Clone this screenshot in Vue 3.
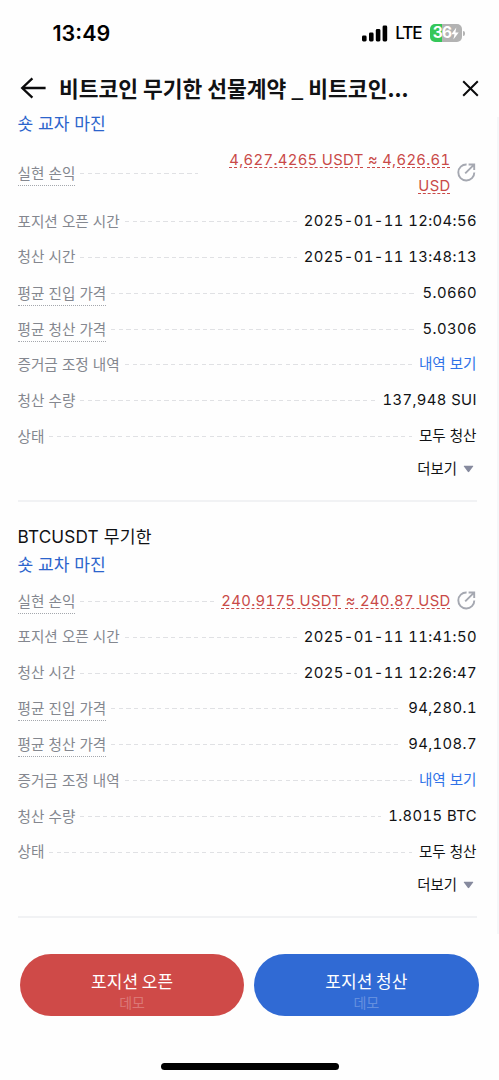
<script setup>
const positions = [
  {
    symbol: '',
    margin: '숏 교자 마진',
    pnl: [['4,627.4265 USDT'], ['≈ 4,626.61', 'USD']],
    tall: true,
    rows: [
      { label: '포지션 오픈 시간', value: '2025-01-11 12:04:56', kind: 'time' },
      { label: '청산 시간', value: '2025-01-11 13:48:13', kind: 'time' },
      { label: '평균 진입 가격', value: '5.0660', hint: true },
      { label: '평균 청산 가격', value: '5.0306', hint: true },
      { label: '증거금 조정 내역', value: '내역 보기', kind: 'link' },
      { label: '청산 수량', value: '137,948 SUI' },
      { label: '상태', value: '모두 청산', kind: 'ko' },
    ],
  },
  {
    symbol: 'BTCUSDT 무기한',
    margin: '숏 교차 마진',
    pnl: [['240.9175 USDT'], ['≈ 240.87 USD']],
    tall: false,
    rows: [
      { label: '포지션 오픈 시간', value: '2025-01-11 11:41:50', kind: 'time' },
      { label: '청산 시간', value: '2025-01-11 12:26:47', kind: 'time' },
      { label: '평균 진입 가격', value: '94,280.1', hint: true },
      { label: '평균 청산 가격', value: '94,108.7', hint: true },
      { label: '증거금 조정 내역', value: '내역 보기', kind: 'link' },
      { label: '청산 수량', value: '1.8015 BTC' },
      { label: '상태', value: '모두 청산', kind: 'ko' },
    ],
  },
]
</script>

<template>
  <div class="screen">
    <div class="status">
      <span class="clock">13:49</span>
      <div class="indicators">
        <svg class="signal" width="26" height="17" viewBox="0 0 26 17">
          <rect x="0" y="10.5" width="4.6" height="6" rx="1.4" />
          <rect x="7" y="7.5" width="4.6" height="9" rx="1.4" />
          <rect x="13.8" y="4" width="4.6" height="12.5" rx="1.4" />
          <rect x="20.6" y="0.5" width="4.6" height="16" rx="1.4" />
        </svg>
        <span class="network">LTE</span>
        <div class="battery">
          <span class="level">36</span>
          <svg class="bolt" width="8" height="13" viewBox="0 0 8 13">
            <path d="M5.3 0.6 L0.3 7.2 H3.5 L2.4 12.4 L7.7 5.5 H4.4 Z" fill="#fff" />
          </svg>
        </div>
        <span class="nub"></span>
      </div>
    </div>

    <header class="header">
      <svg class="back" width="27" height="22" viewBox="0 0 27 22">
        <path d="M12.4 1.3 L2.2 11 L12.4 20.7 M2.4 11 H25.6" fill="none" stroke="#0b0b0c" stroke-width="2.3" />
      </svg>
      <h1 class="title">비트코인 무기한 선물계약 _ 비트코인...</h1>
      <svg class="close" width="17" height="17" viewBox="0 0 17 17">
        <path d="M1.2 1.2 L15.8 15.8 M15.8 1.2 L1.2 15.8" fill="none" stroke="#0b0b0c" stroke-width="2" />
      </svg>
    </header>

    <main class="list">
      <section v-for="(p, i) in positions" :key="i" class="position">
        <h2 v-if="p.symbol" class="symbol">{{ p.symbol }}</h2>
        <div class="margin">{{ p.margin }}</div>
        <div class="row" :class="{ tall: p.tall }">
          <span class="label hint">실현 손익</span>
          <span class="leader"></span>
          <span class="pnl">
            <span class="amount">{{ p.pnl[0][0] }}</span>&#32;<span class="amount">{{ p.pnl[1][0] }}</span>
            <template v-if="p.pnl[1][1]"><br /><span class="amount">{{ p.pnl[1][1] }}</span></template>
          </span>
          <svg class="share" width="19" height="19" viewBox="0 0 19 19">
            <path d="M9.6 1.5 A8 8 0 1 0 17.3 9.4" fill="none" stroke="#a5a8b1" stroke-width="1.9" />
            <path d="M8.2 10.4 L16.8 1.8 M11.6 1.5 H17.2 V7.1" fill="none" stroke="#a5a8b1" stroke-width="1.9" />
          </svg>
        </div>
        <div v-for="row in p.rows" :key="row.label" class="row">
          <span class="label" :class="{ hint: row.hint }">{{ row.label }}</span>
          <span class="leader"></span>
          <span class="value" :class="row.kind">{{ row.value }}</span>
        </div>
        <div class="more">
          <span>더보기</span>
          <svg width="11" height="8" viewBox="0 0 11 8">
            <path d="M1.2 0.8 H9.8 Q10.7 0.8 10.1 1.6 L6.2 6.8 Q5.5 7.6 4.8 6.8 L0.9 1.6 Q0.3 0.8 1.2 0.8 Z" fill="#868a9e" />
          </svg>
        </div>
      </section>
    </main>

    <footer class="actions">
      <button class="action open"><span>포지션 오픈</span><small>데모</small></button>
      <button class="action settle"><span>포지션 청산</span><small>데모</small></button>
    </footer>
    <div class="home"></div>
  </div>
</template>

<style>
body {
  margin: 0;
  background: #fff;
}
</style>

<style scoped>
.screen {
  display: flex;
  flex-direction: column;
  width: 499px;
  height: 1080px;
  overflow: hidden;
  background: #fefefe;
  color: #111214;
  font-family: Inter, "Noto Sans CJK KR", sans-serif;
}
.status {
  display: flex;
  flex: none;
  align-items: center;
  justify-content: space-between;
  box-sizing: border-box;
  height: 66px;
  padding: 0 34px 0 52.5px;
}
.clock {
  font-size: 21.5px;
  font-weight: 600;
  color: #000;
}
.indicators {
  display: flex;
  align-items: center;
}
.network {
  margin: 0 0.6px 0 7px;
  font-size: 17px;
  font-weight: 500;
  letter-spacing: -1.1px;
  color: #000;
}
.battery {
  display: flex;
  align-items: center;
  justify-content: center;
  width: 32px;
  height: 18px;
  margin-left: 8px;
  border-radius: 5px;
  background: linear-gradient(90deg, #35c759 0 12px, #b3b3b3 12px);
}
.level {
  font-size: 15.5px;
  font-weight: 700;
  line-height: 18px;
  letter-spacing: -0.8px;
  color: #fff;
}
.nub {
  width: 2px;
  height: 5px;
  margin-left: 1px;
  border-radius: 0 2px 2px 0;
  background: #b3b3b3;
}
.header {
  display: flex;
  flex: none;
  align-items: center;
  box-sizing: border-box;
  height: 51px;
  padding: 0 20px 7px 20px;
}
.title {
  flex: 1;
  margin: 0 0 0 12px;
  font-family: "Noto Sans CJK KR", sans-serif;
  font-size: 21.5px;
  font-weight: 700;
  line-height: 32px;
  white-space: nowrap;
}
.list {
  display: flex;
  flex: none;
  flex-direction: column;
  box-sizing: border-box;
  height: 817px;
  padding: 0 20.5px 16px 17.5px;
  border-right: 2px solid #f6f7f9;
}
.position {
  flex: none;
  padding: 20px 0 16px;
  border-bottom: 2px solid #f1f2f4;
}
.position:first-child {
  margin-top: -7.9px;
  padding-top: 0;
}
.symbol {
  height: 28px;
  margin: 0;
  font-size: 17.2px;
  font-weight: 400;
  line-height: 29px;
  letter-spacing: 0.15px;
}
.margin {
  height: 28px;
  margin-bottom: 5px;
  font-size: 17.1px;
  line-height: 29px;
  color: #2c64cc;
}
.row {
  display: flex;
  align-items: center;
  height: 35.85px;
  font-size: 14.8px;
  white-space: nowrap;
}
.row.tall {
  height: 61px;
}
.label {
  padding-top: 1px;
  font-size: 14.6px;
  line-height: 20px;
  color: #84878f;
}
.label.hint {
  padding: 4px 0 1px;
  border-bottom: 1px dotted #a4a7ad;
}
.leader {
  flex: 1;
  height: 1px;
  margin: 1px 7px 0 5px;
  background: repeating-linear-gradient(90deg, #e0e1e4 0 4.4px, transparent 4.4px 7.65px);
}
.value {
  margin-right: -0.4px;
  line-height: 20px;
  letter-spacing: 0.4px;
  font-variant-numeric: tabular-nums;
}
.value.link,
.value.ko {
  margin-right: 0;
  font-size: 14.6px;
  letter-spacing: 0;
}
.value.link {
  color: #2f72e8;
}
.pnl {
  line-height: 26px;
  letter-spacing: 0.35px;
  text-align: right;
  font-variant-numeric: tabular-nums;
  color: #c94a48;
}
.tall .pnl {
  width: 246px;
}
.amount {
  text-decoration: underline dashed 1px;
  text-underline-offset: 1.5px;
}
.share {
  flex: none;
  margin: 0 0.5px 0 6.5px;
}
.more {
  display: flex;
  align-items: center;
  justify-content: flex-end;
  gap: 6px;
  height: 30px;
  padding-right: 2.5px;
  font-size: 14.4px;
}
.more span {
  line-height: 20px;
}
.actions {
  display: flex;
  flex: none;
  gap: 10px;
  padding: 20px 20.5px 0 20px;
}
.action {
  display: flex;
  flex: 1;
  flex-direction: column;
  align-items: center;
  box-sizing: border-box;
  height: 62px;
  padding: 16px 0 0;
  border: 0;
  border-radius: 31px;
  font-family: "Noto Sans CJK KR", sans-serif;
  color: #fff;
}
.action span {
  font-size: 17px;
  line-height: 22px;
}
.action small {
  font-size: 14px;
  line-height: 20px;
  color: rgba(255, 255, 255, 0.27);
}
.open {
  background: #cf4a48;
}
.settle {
  background: #306ad4;
}
.home {
  width: 178px;
  height: 7px;
  margin: 47px auto 0;
  border-radius: 4px;
  background: #000;
}
</style>
